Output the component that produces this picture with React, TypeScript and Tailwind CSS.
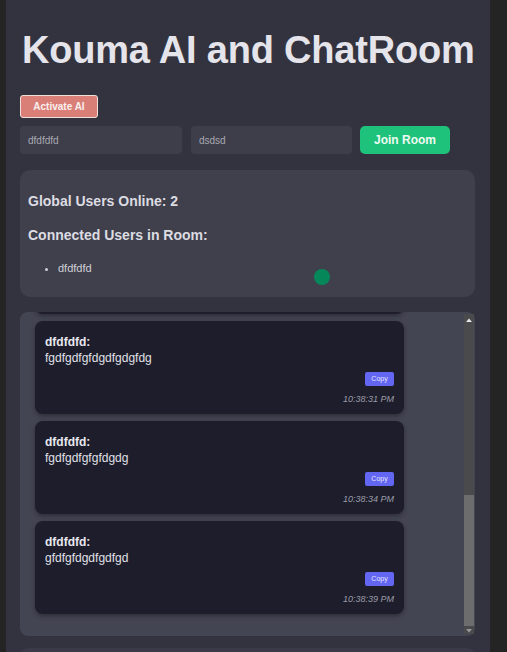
import { useEffect, useRef } from 'react';

const MESSAGES = [
  { user: 'dfdfdfd', text: 'dfgdfgdfgdfg', time: '10:38:28 PM' },
  { user: 'dfdfdfd', text: 'fgdfgdfgfdgdfgdgfdg', time: '10:38:31 PM' },
  { user: 'dfdfdfd', text: 'fgdfgdfgfgfdgdg', time: '10:38:34 PM' },
  { user: 'dfdfdfd', text: 'gfdfgfdgdfgdfgd', time: '10:38:39 PM' },
];

export default function App() {
  const chatRef = useRef<HTMLDivElement>(null);

  useEffect(() => {
    const el = chatRef.current;
    if (el) el.scrollTop = el.scrollHeight;
  }, []);

  return (
    <div className="min-h-[652px] bg-[#242424] font-['Liberation_Sans',Arial,sans-serif] overflow-hidden">
      <div className="ml-[6px] w-[484px] min-h-[652px] bg-[#33333f] px-[14px] pt-[28px]">
        <h1 className="pl-[2px] text-[38px] leading-[44px] font-bold tracking-[-0.2px] text-[#e4e4ea]">
          Kouma AI and ChatRoom
        </h1>

        <button className="mt-[23px] h-[23px] w-[78px] rounded-[3px] border border-[#f0e0dc] bg-[#d97f78] text-[10px] font-bold text-[#fbefee]">
          Activate AI
        </button>

        <div className="mt-[8px] flex items-center">
          <div className="flex h-[28px] w-[162px] items-center rounded-[4px] bg-[#3e3e4a] pl-[8px] text-[10px] text-[#a9a9b2]">
            dfdfdfd
          </div>
          <div className="ml-[9px] flex h-[28px] w-[161px] items-center rounded-[4px] bg-[#3e3e4a] pl-[8px] text-[10px] text-[#a9a9b2]">
            dsdsd
          </div>
          <button className="ml-[8px] h-[28px] w-[90px] rounded-[5px] bg-[#1ec27a] text-[12px] font-bold text-[#eefaf3]">
            Join Room
          </button>
        </div>

        <div className="relative mt-[16px] h-[127px] w-[455px] rounded-[10px] bg-[#40404c] pl-[8px] pt-[23px]">
          <h3 className="text-[14px] leading-[16px] font-bold text-[#dcdce2]">Global Users Online: 2</h3>
          <h3 className="mt-[18px] text-[14px] leading-[16px] font-bold text-[#dcdce2]">Connected Users in Room:</h3>
          <ul className="mt-[18px] list-disc pl-[30px] text-[11px] leading-[14px] text-[#d0d0d8]">
            <li>dfdfdfd</li>
          </ul>
          <span className="absolute left-[294px] top-[99px] h-[16px] w-[16px] rounded-full bg-[#05875a]" />
        </div>

        <div className="relative mt-[15px] h-[324px] w-[455px] rounded-[8px] bg-[#444553]">
          <div
            ref={chatRef}
            className="h-full overflow-y-hidden pl-[15px] pr-[71px] pt-[14px] pb-[22px]"
          >
            <div className="flex flex-col gap-[7px]">
              {MESSAGES.map((m, i) => (
                <div
                  key={i}
                  className="flex h-[93px] w-[369px] flex-col rounded-[8px] bg-[#1d1d2c] px-[10px] pt-[14px] shadow-[0_2px_4px_rgba(0,0,0,0.35)]"
                >
                  <div className="text-[12px] leading-[14px] font-bold text-[#e8e8ee]">{m.user}:</div>
                  <div className="mt-[2px] text-[12px] leading-[14px] text-[#e0e0e6]">{m.text}</div>
                  <div className="mt-[7px] flex justify-end">
                    <button className="h-[14px] w-[29px] rounded-[2px] bg-[#6366f1] text-[7px] text-[#e6e7ff]">
                      Copy
                    </button>
                  </div>
                  <div className="mt-[8px] text-right text-[9px] leading-[10px] italic text-[#9c9ca6]">{m.time}</div>
                </div>
              ))}
            </div>
          </div>
          {/* scrollbar */}
          <div className="absolute right-[1px] top-[2px] flex h-[320px] w-[10px] flex-col items-center bg-[#4a4a4c]">
            <svg width="8" height="6" viewBox="0 0 8 6" className="mt-[3px]">
              <path d="M1 5 L4 1.5 L7 5 Z" fill="#e8e8e8" />
            </svg>
            <div className="mt-[172px] h-[133px] w-[10px] bg-[#6d6d6d]" />
            <svg width="8" height="6" viewBox="0 0 8 6" className="mt-[2px]">
              <path d="M1 1 L4 4.5 L7 1 Z" fill="#9a9a9a" />
            </svg>
          </div>
        </div>

        <div className="mt-[12px] h-[40px] w-[455px] rounded-t-[8px] bg-[#3b3b48]" />
      </div>
    </div>
  );
}
